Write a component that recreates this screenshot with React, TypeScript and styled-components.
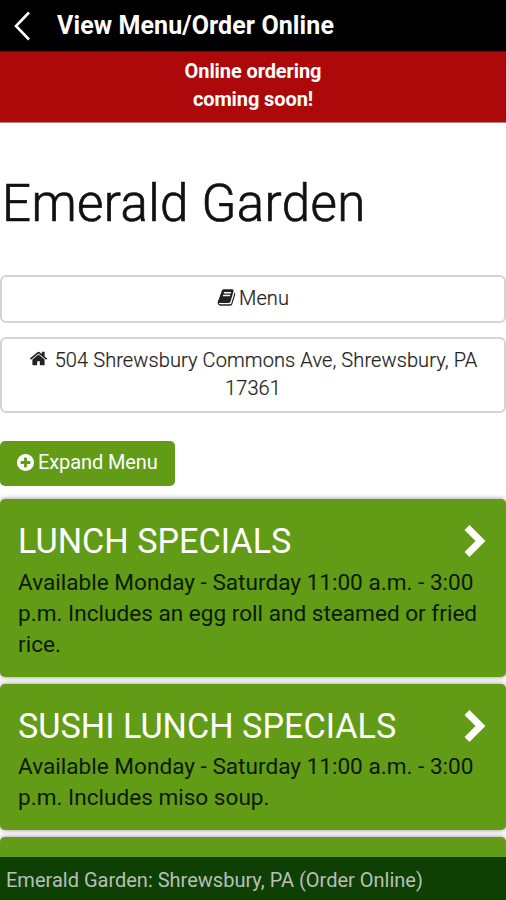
import * as React from "react";
import styled, { createGlobalStyle } from "styled-components";

const GlobalStyle = createGlobalStyle`
  * {
    box-sizing: border-box;
  }

  body {
    margin: 0;
    background: #fff;
    font-family: Roboto, "Liberation Sans", sans-serif;
    overflow: hidden;
  }
`;

const Screen = styled.div`
  display: flex;
  flex-direction: column;
  width: 100%;
  height: 900px;
  overflow: hidden;
`;

const Header = styled.header`
  display: flex;
  flex: none;
  align-items: center;
  gap: 26px;
  height: 51px;
  padding-left: 14px;
  background: #000;
  color: #fff;
`;

const HeaderTitle = styled.div`
  font-size: 25px;
  font-weight: 700;
  line-height: 50px;
  letter-spacing: 0.1px;
`;

const Banner = styled.div`
  flex: none;
  height: 72px;
  padding-top: 5px;
  border-top: 1px solid #6d0808;
  border-bottom: 1px solid #b98080;
  background: #ae090a;
  color: #fff;
  font-size: 20px;
  font-weight: 700;
  line-height: 28px;
  letter-spacing: -0.1px;
  text-align: center;
`;

const Content = styled.main`
  display: flex;
  flex: 1;
  flex-direction: column;
  min-height: 0;
  overflow: hidden;
`;

const Title = styled.h1`
  flex: none;
  margin: 51px 0 41px;
  padding-left: 2px;
  color: #111;
  font-size: 51px;
  font-weight: 300;
  line-height: 60px;
  letter-spacing: 0.4px;
  -webkit-text-stroke: 0.7px #111;
`;

const InfoButton = styled.button`
  flex: none;
  margin: 0 0 14px;
  padding: 7px 24px 9px;
  border: 2px solid #d4d4d4;
  border-radius: 6px;
  background: #fff;
  color: #222;
  font-family: inherit;
  font-size: 20px;
  font-weight: 300;
  line-height: 28px;
  letter-spacing: 0.1px;
  -webkit-text-stroke: 0.2px #222;
`;

const ExpandButton = styled.button`
  display: flex;
  flex: none;
  align-items: center;
  align-self: flex-start;
  gap: 4px;
  width: 175px;
  height: 45px;
  margin: 14px 0 13px;
  padding: 0 0 3px 17px;
  border: 0;
  border-radius: 5px;
  background: #629b16;
  color: #fff;
  font-family: inherit;
  font-size: 20px;
  letter-spacing: -0.1px;
`;

const Card = styled.section`
  flex: none;
  margin-bottom: 7px;
  padding: 19px 17px 17px 18px;
  border-radius: 5px;
  background: #629b16;
  box-shadow: 0 0 5px rgba(40, 20, 50, 0.5);
`;

const CardHead = styled.div`
  display: flex;
  align-items: center;
  justify-content: space-between;
  padding-right: 3px;
`;

const CardTitle = styled.h2`
  margin: 0;
  color: #fff;
  font-size: 34.2px;
  font-weight: 400;
  line-height: 46px;
`;

const CardText = styled.p`
  margin: 0;
  padding-top: 2.5px;
  color: #0c1a02;
  font-size: 22.6px;
  line-height: 31px;
`;

const Footer = styled.footer`
  position: absolute;
  top: 857px;
  left: 0;
  width: 100%;
  height: 43px;
  padding-left: 6px;
  background: #0e4004;
  color: #b9bfb7;
  font-size: 20px;
  line-height: 46px;
`;

const Icon = styled.svg<{ $size: number; $gap?: number; $drop?: number }>`
  width: ${({ $size }) => $size}px;
  height: ${({ $size }) => $size}px;
  margin-right: ${({ $gap = 0 }) => $gap}px;
  vertical-align: ${({ $drop = 0 }) => -$drop}px;
  flex: none;
  fill: currentColor;
`;

const BackIcon = styled.svg`
  width: 17px;
  height: 30px;
  fill: none;
  stroke: #fff;
  stroke-width: 2.6;
`;

const ChevronIcon = styled.svg`
  width: 22px;
  height: 32px;
  fill: none;
  stroke: #fff;
  stroke-width: 7;
`;

const BookIcon = () => (
  <Icon viewBox="0 0 1792 1792" $size={19} $gap={3} $drop={2}>
    <path d="M1703 478q40 57 18 129l-275 906q-19 64-76.5 107.5t-122.5 43.5h-923q-77 0-148.5-53.5t-99.5-131.5q-24-67-2-127 0-4 3-27t4-37q1-8-3-21.5t-3-19.5q2-11 8-21t16.5-23.5 16.5-23.5q23-38 45-91.5t30-91.5q3-10 .5-30t-.5-28q3-11 17-28t17-23q21-36 42-92t25-90q1-9-2.5-32t.5-28q4-13 22-30.5t22-22.5q19-26 42.5-84.5t27.5-96.5q1-8-3-25.5t-2-26.5q2-8 9-18t18-23 17-21q8-12 16.5-30.5t15-35 16-36 19.5-32 26.5-23.5 36-11.5 47.5 5.5l-1 3q38-9 51-9h761q74 0 114 56t18 130l-274 906q-36 119-71.5 153.5t-128.5 34.5h-869q-27 0-38 15-11 16-1 43 24 70 144 70h923q29 0 56-15.5t35-41.5l300-987q7-22 5-57 38 15 59 43zm-1064 2q-4 13 2 22.5t20 9.5h608q13 0 25.5-9.5t16.5-22.5l21-64q4-13-2-22.5t-20-9.5h-608q-13 0-25.5 9.5t-16.5 22.5zm-83 256q-4 13 2 22.5t20 9.5h608q13 0 25.5-9.5t16.5-22.5l21-64q4-13-2-22.5t-20-9.5h-608q-13 0-25.5 9.5t-16.5 22.5z" />
  </Icon>
);

const HomeIcon = () => (
  <Icon viewBox="0 0 1792 1792" $size={19} $gap={7} $drop={1}>
    <path d="M1472 992v480q0 26-19 45t-45 19h-384v-384h-256v384h-384q-26 0-45-19t-19-45v-480q0-1 .5-3t.5-3l575-474 575 474q1 2 1 6zm223-69l-62 74q-8 9-21 11h-3q-13 0-21-7l-692-577-692 577q-12 8-24 7-13-2-21-11l-62-74q-8-10-7-23.5t11-21.5l719-599q32-26 76-26t76 26l244 204v-195q0-14 9-23t23-9h192q14 0 23 9t9 23v408l219 182q10 8 11 21.5t-7 23.5z" />
  </Icon>
);

const PlusCircleIcon = () => (
  <Icon viewBox="128 128 1536 1536" $size={17}>
    <path d="M1344 960v-128q0-26-19-45t-45-19h-256v-256q0-26-19-45t-45-19h-128q-26 0-45 19t-19 45v256h-256q-26 0-45 19t-19 45v128q0 26 19 45t45 19h256v256q0 26 19 45t45 19h128q26 0 45-19t19-45v-256h256q26 0 45-19t19-45zm320-64q0 209-103 385.5t-279.5 279.5-385.5 103-385.5-103-279.5-279.5-103-385.5 103-385.5 279.5-279.5 385.5-103 385.5 103 279.5 279.5 103 385.5z" />
  </Icon>
);

const sections = [
  {
    name: "LUNCH SPECIALS",
    text:
      "Available Monday - Saturday 11:00 a.m. - 3:00 p.m. Includes an egg roll and steamed or fried rice."
  },
  {
    name: "SUSHI LUNCH SPECIALS",
    text: "Available Monday - Saturday 11:00 a.m. - 3:00 p.m. Includes miso soup."
  }
];

const App: React.FC = () => {
  return (
    <Screen>
      <GlobalStyle />
      <Header>
        <BackIcon viewBox="0 0 17 30">
          <path d="M15 1.5L2 15l13 13.5" />
        </BackIcon>
        <HeaderTitle>View Menu/Order Online</HeaderTitle>
      </Header>
      <Banner>
        Online ordering
        <br />
        coming soon!
      </Banner>
      <Content>
        <Title>Emerald Garden</Title>
        <InfoButton>
          <BookIcon />
          Menu
        </InfoButton>
        <InfoButton>
          <HomeIcon />
          504 Shrewsbury Commons Ave, Shrewsbury, PA 17361
        </InfoButton>
        <ExpandButton>
          <PlusCircleIcon />
          Expand Menu
        </ExpandButton>
        {sections.map(section => (
          <Card key={section.name}>
            <CardHead>
              <CardTitle>{section.name}</CardTitle>
              <ChevronIcon viewBox="0 0 22 32">
                <path d="M3 2.5L16.5 16L3 29.5" />
              </ChevronIcon>
            </CardHead>
            <CardText>{section.text}</CardText>
          </Card>
        ))}
        <Card />
      </Content>
      <Footer>Emerald Garden: Shrewsbury, PA (Order Online)</Footer>
    </Screen>
  );
};

export default App;
